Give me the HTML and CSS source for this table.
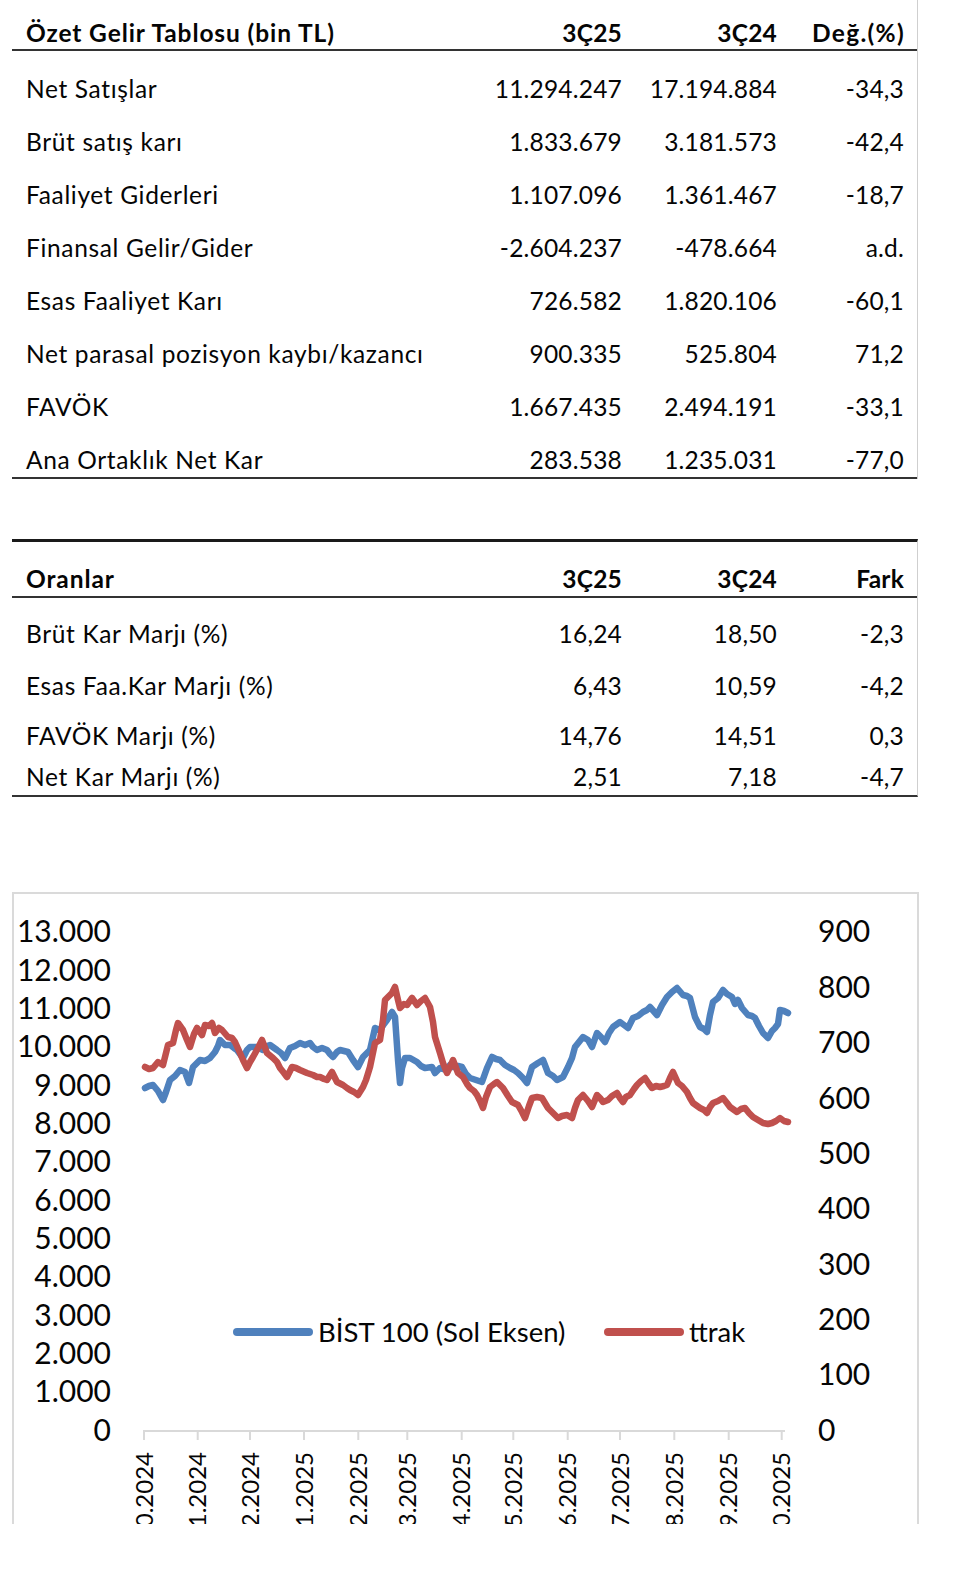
FILE: index.html
```html
<!DOCTYPE html>
<html lang="tr">
<head>
<meta charset="utf-8">
<title>Özet Gelir Tablosu</title>
<link rel="stylesheet" href="styles.css">
</head>
<body>
<main class="page">
  <section class="tbl t1">
    <div class="row head"><div class="lbl">Özet Gelir Tablosu (bin TL)</div><div class="n2">3Ç25</div><div class="n3">3Ç24</div><div class="n4 wide">Değ.(%)</div></div>
    <div class="row first"><div class="lbl">Net Satışlar</div><div class="n2">11.294.247</div><div class="n3">17.194.884</div><div class="n4">-34,3</div></div>
    <div class="row"><div class="lbl">Brüt satış karı</div><div class="n2">1.833.679</div><div class="n3">3.181.573</div><div class="n4">-42,4</div></div>
    <div class="row"><div class="lbl">Faaliyet Giderleri</div><div class="n2">1.107.096</div><div class="n3">1.361.467</div><div class="n4">-18,7</div></div>
    <div class="row"><div class="lbl">Finansal Gelir/Gider</div><div class="n2">-2.604.237</div><div class="n3">-478.664</div><div class="n4">a.d.</div></div>
    <div class="row"><div class="lbl">Esas Faaliyet Karı</div><div class="n2">726.582</div><div class="n3">1.820.106</div><div class="n4">-60,1</div></div>
    <div class="row"><div class="lbl">Net parasal pozisyon kaybı/kazancı</div><div class="n2">900.335</div><div class="n3">525.804</div><div class="n4">71,2</div></div>
    <div class="row"><div class="lbl">FAVÖK</div><div class="n2">1.667.435</div><div class="n3">2.494.191</div><div class="n4">-33,1</div></div>
    <div class="row last"><div class="lbl">Ana Ortaklık Net Kar</div><div class="n2">283.538</div><div class="n3">1.235.031</div><div class="n4">-77,0</div></div>
  </section>

  <section class="tbl t2">
    <div class="row head"><div class="lbl">Oranlar</div><div class="n2">3Ç25</div><div class="n3">3Ç24</div><div class="n4">Fark</div></div>
    <div class="row r1"><div class="lbl">Brüt Kar Marjı (%)</div><div class="n2">16,24</div><div class="n3">18,50</div><div class="n4">-2,3</div></div>
    <div class="row r2"><div class="lbl">Esas Faa.Kar Marjı (%)</div><div class="n2">6,43</div><div class="n3">10,59</div><div class="n4">-4,2</div></div>
    <div class="row r3"><div class="lbl">FAVÖK Marjı (%)</div><div class="n2">14,76</div><div class="n3">14,51</div><div class="n4">0,3</div></div>
    <div class="row r4"><div class="lbl">Net Kar Marjı (%)</div><div class="n2">2,51</div><div class="n3">7,18</div><div class="n4">-4,7</div></div>
  </section>

  <section class="chart">
    <svg class="plot" width="903" height="630" viewBox="14 894 903 630" xmlns="http://www.w3.org/2000/svg">
      <g class="yl">
        <text x="111" y="1440.7">0</text>
        <text x="111" y="1402.4">1.000</text>
        <text x="111" y="1364.0">2.000</text>
        <text x="111" y="1325.7">3.000</text>
        <text x="111" y="1287.4">4.000</text>
        <text x="111" y="1249.0">5.000</text>
        <text x="111" y="1210.7">6.000</text>
        <text x="111" y="1172.4">7.000</text>
        <text x="111" y="1134.1">8.000</text>
        <text x="111" y="1095.7">9.000</text>
        <text x="111" y="1057.4">10.000</text>
        <text x="111" y="1019.1">11.000</text>
        <text x="111" y="980.7">12.000</text>
        <text x="111" y="942.4">13.000</text>
      </g>
      <g class="yr">
        <text x="818" y="1440.7">0</text>
        <text x="818" y="1385.3">100</text>
        <text x="818" y="1330.0">200</text>
        <text x="818" y="1274.6">300</text>
        <text x="818" y="1219.2">400</text>
        <text x="818" y="1163.9">500</text>
        <text x="818" y="1108.5">600</text>
        <text x="818" y="1053.1">700</text>
        <text x="818" y="997.7">800</text>
        <text x="818" y="942.4">900</text>
      </g>
      <g class="axis">
        <line x1="143" y1="1431" x2="785" y2="1431"/>
        <line x1="144" y1="1431" x2="144" y2="1440"/>
        <line x1="197.7" y1="1431" x2="197.7" y2="1440"/>
        <line x1="250" y1="1431" x2="250" y2="1440"/>
        <line x1="304" y1="1431" x2="304" y2="1440"/>
        <line x1="358.3" y1="1431" x2="358.3" y2="1440"/>
        <line x1="407.3" y1="1431" x2="407.3" y2="1440"/>
        <line x1="461.7" y1="1431" x2="461.7" y2="1440"/>
        <line x1="513.3" y1="1431" x2="513.3" y2="1440"/>
        <line x1="567.7" y1="1431" x2="567.7" y2="1440"/>
        <line x1="620" y1="1431" x2="620" y2="1440"/>
        <line x1="674.3" y1="1431" x2="674.3" y2="1440"/>
        <line x1="728.7" y1="1431" x2="728.7" y2="1440"/>
        <line x1="781.7" y1="1431" x2="781.7" y2="1440"/>
      </g>
      <g class="xl">
        <text transform="translate(152.6 1452) rotate(-90)">01.10.2024</text>
        <text transform="translate(206.3 1452) rotate(-90)">01.11.2024</text>
        <text transform="translate(258.6 1452) rotate(-90)">01.12.2024</text>
        <text transform="translate(312.6 1452) rotate(-90)">01.01.2025</text>
        <text transform="translate(366.9 1452) rotate(-90)">01.02.2025</text>
        <text transform="translate(415.9 1452) rotate(-90)">01.03.2025</text>
        <text transform="translate(470.3 1452) rotate(-90)">01.04.2025</text>
        <text transform="translate(521.9 1452) rotate(-90)">01.05.2025</text>
        <text transform="translate(576.3 1452) rotate(-90)">01.06.2025</text>
        <text transform="translate(628.6 1452) rotate(-90)">01.07.2025</text>
        <text transform="translate(682.9 1452) rotate(-90)">01.08.2025</text>
        <text transform="translate(737.3 1452) rotate(-90)">01.09.2025</text>
        <text transform="translate(790.3 1452) rotate(-90)">01.10.2025</text>
      </g>
      <polyline class="bist" points="145,1088 149,1086 153,1085 158,1091 163,1100 166,1092 170,1080 175,1076 180,1070 185,1072 189,1083 193,1067 197,1063 200,1060 205,1061 210,1058 215,1052 218,1046 220,1040 225,1045 230,1045 234,1048 237,1050 243,1058 247,1050 250,1047 257,1047 263,1050 267,1046 270,1045 277,1050 281,1053 285,1058 290,1048 295,1046 300,1043 305,1045 310,1043 313,1047 317,1050 322,1048 327,1050 330,1054 333,1057 337,1052 340,1050 348,1052 353,1060 358,1067 363,1057 367,1053 370,1050 375,1028 380,1030 384,1024 387,1020 392,1012 395,1017 398,1060 400,1083 402,1068 405,1058 410,1058 417,1062 421,1066 425,1068 432,1067 435,1073 440,1068 447,1070 450,1065 453,1067 458,1066 462,1067 466,1074 470,1078 476,1080 482,1082 487,1068 492,1057 496,1059 500,1060 505,1065 510,1068 514,1070 518,1073 523,1078 527,1083 532,1067 538,1063 543,1060 548,1073 553,1076 557,1080 563,1077 568,1067 572,1058 575,1047 579,1042 583,1037 588,1040 592,1047 597,1033 601,1037 605,1042 609,1033 613,1027 620,1022 624,1025 628,1028 633,1018 638,1016 643,1012 647,1010 650,1007 657,1015 662,1005 667,997 672,992 677,988 683,995 687,996 690,998 695,1017 700,1027 704,1029 707,1032 710,1015 713,1002 718,998 723,990 727,994 732,997 735,1004 738,1000 742,1008 748,1015 752,1016 755,1018 759,1026 763,1033 768,1038 772,1031 775,1028 778,1024 780,1010 784,1011 788,1013"/>
      <polyline class="ttrak" points="145,1067 149,1069 153,1068 158,1062 163,1065 168,1045 173,1043 176,1030 178,1023 183,1030 187,1040 190,1047 194,1034 197,1028 202,1035 205,1025 209,1026 212,1023 215,1033 219,1028 222,1030 228,1037 232,1038 235,1042 240,1053 243,1060 247,1068 250,1062 253,1057 258,1048 262,1040 267,1053 273,1058 277,1062 280,1068 284,1073 287,1077 292,1067 296,1068 300,1070 307,1073 313,1075 317,1077 320,1077 324,1079 327,1080 332,1072 337,1082 343,1085 347,1088 350,1090 354,1092 358,1095 363,1087 366,1080 370,1067 375,1043 380,1040 383,1020 385,1000 389,996 392,993 395,987 398,1000 400,1008 404,1004 407,1005 412,998 417,1005 421,1001 425,998 430,1007 433,1022 435,1037 440,1053 443,1063 447,1073 450,1067 453,1060 458,1073 463,1077 467,1084 470,1088 474,1091 477,1095 480,1101 483,1108 486,1097 490,1087 494,1084 497,1082 500,1085 503,1088 508,1096 512,1102 518,1105 522,1112 525,1118 529,1106 532,1098 537,1097 542,1098 548,1108 553,1113 558,1118 562,1116 567,1115 572,1118 575,1108 578,1100 583,1095 588,1101 592,1107 597,1095 600,1098 603,1102 608,1100 612,1096 617,1093 620,1098 623,1102 626,1097 630,1095 634,1089 637,1085 641,1081 645,1078 649,1084 652,1088 656,1086 660,1087 664,1086 667,1085 670,1078 673,1072 678,1083 682,1086 687,1092 690,1098 693,1103 700,1108 704,1110 707,1113 710,1107 713,1103 718,1101 723,1098 727,1103 730,1107 737,1112 741,1109 745,1108 749,1113 753,1117 758,1120 763,1123 768,1124 772,1123 776,1121 780,1118 784,1121 788,1122"/>
      <g class="legend">
        <line class="lg-bist" x1="237" y1="1332" x2="309" y2="1332"/>
        <text x="318" y="1341.7">BİST 100 (Sol Eksen)</text>
        <line class="lg-ttrak" x1="608" y1="1332" x2="680" y2="1332"/>
        <text x="689" y="1341.7">ttrak</text>
      </g>
    </svg>
  </section>
</main>
</body>
</html>
```

FILE: styles.css
```css
html, body {
  margin: 0;
  background: #ffffff;
}

body {
  font-family: Lato, "Liberation Sans", sans-serif;
  color: #050505;
}

.page {
  padding-left: 12px;
  width: 907px;
}

.tbl {
  width: 905px;
  border-right: 1px solid #cfcfcf;
}

.row {
  display: grid;
  grid-template-columns: 431px 195px 155px 124px;
  font-size: 24.5px;
  line-height: 30px;
  padding-top: 19px;
  padding-bottom: 4px;
  white-space: nowrap;
}

.lbl {
  padding-left: 14px;
  letter-spacing: 0.65px;
}

.n2,
.n3 {
  text-align: right;
  padding-right: 16px;
  letter-spacing: 0.2px;
}

.n4 {
  text-align: right;
  padding-right: 13px;
  letter-spacing: 0.2px;
}

.head {
  font-weight: 700;
  border-bottom: 2px solid #333333;
}

.head .lbl {
  letter-spacing: 0.9px;
}

.head .wide {
  letter-spacing: 1.3px;
  padding-right: 12px;
}

/* table 1 */
.t1 .head {
  padding-top: 18px;
  padding-bottom: 1px;
}

.t1 .first {
  padding-top: 23px;
}

.t1 .last {
  padding-bottom: 2px;
  border-bottom: 2px solid #333333;
}

/* table 2 */
.t2 {
  margin-top: 60px;
  border-top: 3px solid #1a1a1a;
  border-bottom: 2px solid #333333;
}

.t2 .head {
  padding-top: 22px;
  padding-bottom: 2px;
}

.t2 .r1 { padding-top: 21px; padding-bottom: 0; }
.t2 .r2 { padding-top: 22px; padding-bottom: 0; }
.t2 .r3 { padding-top: 20px; padding-bottom: 0; }
.t2 .r4 { padding-top: 11px; padding-bottom: 3px; }

/* chart */
.chart {
  margin-top: 95px;
  width: 903px;
  height: 630px;
  border: 2px solid #dadada;
  border-bottom: 0;
  overflow: hidden;
}

.plot {
  display: block;
  font-family: Lato, "Liberation Sans", sans-serif;
}

.yl text {
  font-size: 30px;
  text-anchor: end;
  fill: #050505;
}

.yr text {
  font-size: 30px;
  text-anchor: start;
  fill: #050505;
}

.xl text {
  font-size: 24px;
  text-anchor: end;
  fill: #050505;
}

.axis line {
  stroke: #d9d9d9;
  stroke-width: 2;
}

.bist,
.ttrak {
  fill: none;
  stroke-width: 6.5;
  stroke-linejoin: round;
  stroke-linecap: round;
}

.bist { stroke: #4f81bd; }
.ttrak { stroke: #c0504d; }

.legend text {
  font-size: 27.5px;
  fill: #050505;
}

.legend line {
  stroke-width: 8;
  stroke-linecap: round;
}

.lg-bist { stroke: #4f81bd; }
.lg-ttrak { stroke: #c0504d; }
```
